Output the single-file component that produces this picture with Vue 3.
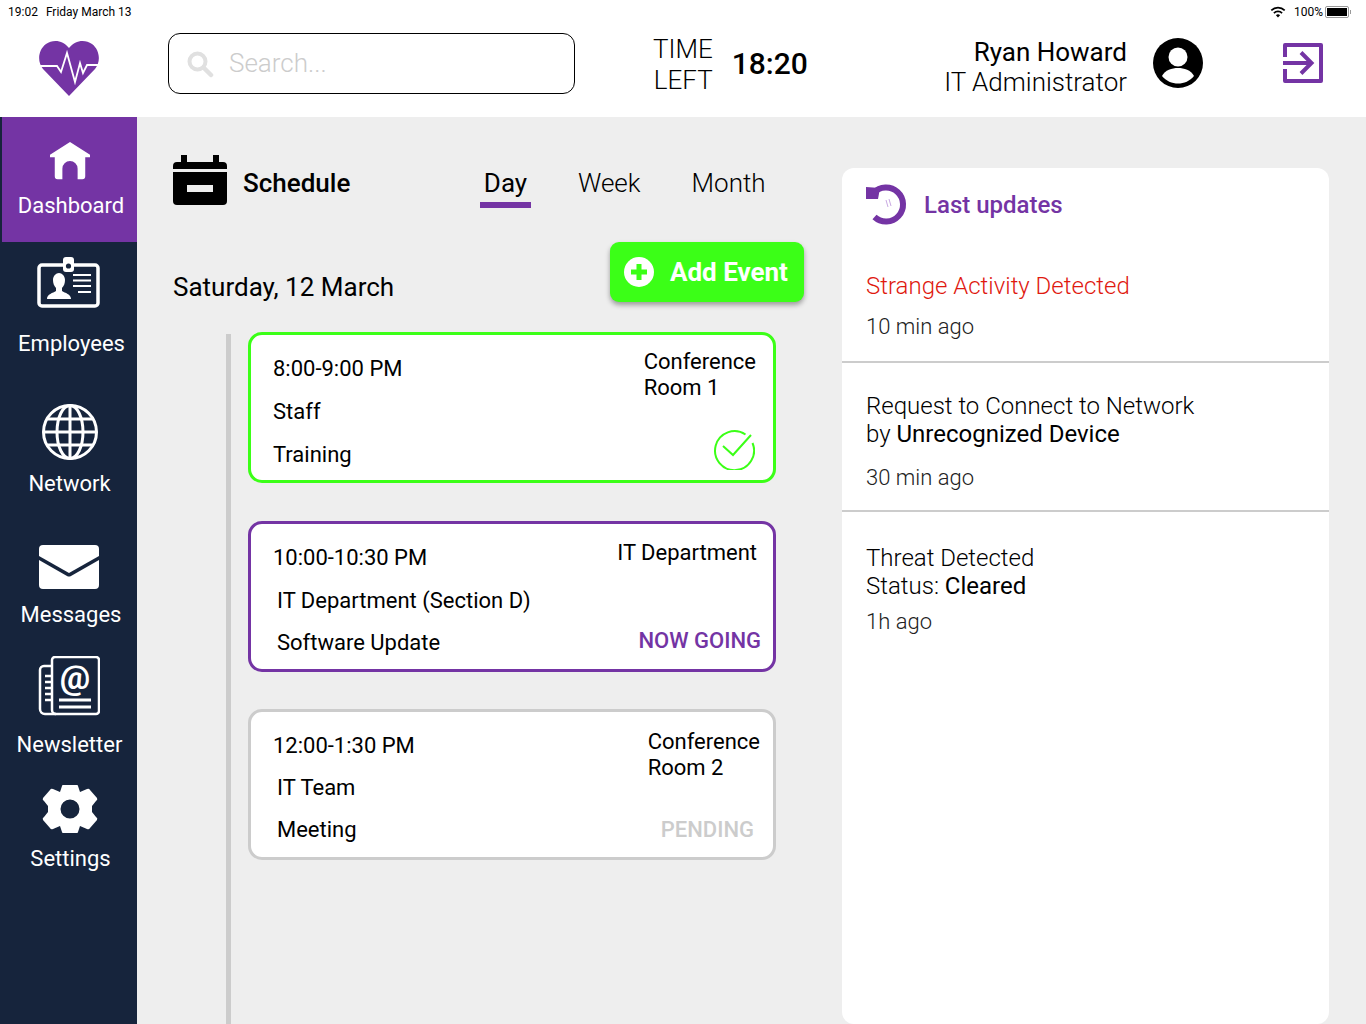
<template>
  <div class="page">
    <div class="status-bar">
      <div class="status-left"><span>19:02</span><span>Friday March 13</span></div>
      <div class="status-right">
        <svg width="16" height="12" viewBox="0 0 16 12"><path d="M8 11.5 5.9 9.2a3 3 0 0 1 4.2 0Z" fill="#000"/><path d="M3.9 7.1a5.8 5.8 0 0 1 8.2 0M1.3 4.4a9.5 9.5 0 0 1 13.4 0" fill="none" stroke="#000" stroke-width="1.7"/></svg>
        <span class="pct">100%</span>
        <span class="battery"><span class="battery-fill"></span></span><span class="battery-tip"></span>
      </div>
    </div>

    <header class="top-bar">
      <div class="logo-cell">
        <svg class="logo" width="62" height="58" viewBox="0 0 62 58">
          <path d="M31 57 5 30C-1 23 0 11 8 5c7-5 17-4 23 4C37 1 47 0 54 5c8 6 9 18 3 25Z" fill="#7434a4"/>
          <path d="M0 27H19L23 33 29 14 37 43 42 24 45 34 49 26H62" fill="none" stroke="#fff" stroke-width="1.800"/>
        </svg>
      </div>
      <div class="search">
        <svg width="28" height="28" viewBox="0 0 28 28"><circle cx="11.500" cy="11.500" r="8" fill="none" stroke="#e0e0e0" stroke-width="4"/><path d="m17.500 17.500 7.500 7.500" stroke="#e0e0e0" stroke-width="4.500" stroke-linecap="round"/></svg>
        <span>Search...</span>
      </div>
      <div class="timer">
        <div class="timer-label"><span>TIME</span><span>LEFT</span></div>
        <div class="timer-value">18:20</div>
      </div>
      <div class="user">
        <div class="user-text"><div class="user-name">Ryan Howard</div><div class="user-role">IT Administrator</div></div>
        <svg width="50" height="50" viewBox="0 0 50 50">
          <circle cx="25" cy="25" r="25" fill="#000"/>
          <circle cx="25" cy="19" r="9.500" fill="#fff"/>
          <path d="M9 38c3-6 10-8 16-8s13 2 16 8c-4 5-10 7.500-16 7.500S13 43 9 38Z" fill="#fff"/>
        </svg>
      </div>
      <svg class="logout" width="42" height="42" viewBox="0 0 42 42">
        <path d="M3 15V3h36v36H3V27" fill="none" stroke="#7434a4" stroke-width="4" stroke-linejoin="round"/>
        <path d="M1 21h29M19 10.500 29.500 21 19 31.500" fill="none" stroke="#7434a4" stroke-width="4"/>
      </svg>
    </header>

    <div class="body">
      <nav class="sidebar">
        <a v-for="item in nav" :key="item.label" class="nav-item" :class="[item.cls, { active: item.active }]">
          <svg v-if="item.icon === 'home'" width="42" height="40" viewBox="0 0 44 42"><path d="M22 0 43 13.500V16H38V36a3 3 0 0 1-3 3H30V28a8 8 0 0 0-16 0V39H9a3 3 0 0 1-3-3V16H1V13.500Z" fill="#fff"/></svg>
          <svg v-else-if="item.icon === 'badge'" width="64" height="52" viewBox="0 0 64 52">
            <rect x="2" y="8" width="59" height="41" rx="3" fill="none" stroke="#fff" stroke-width="3.500"/>
            <rect x="26" y="0" width="11" height="15" rx="3" fill="#fff"/><circle cx="31.500" cy="9" r="2.600" fill="#16243c"/>
            <path d="M10 42c0-5 6-6 9-8v-3c-2-2-3-5-3-8 0-4 3-7 6-7s6 3 6 7c0 3-1 6-3 8v3c3 2 9 3 9 8Z" fill="#fff"/>
            <path d="M36 18h18M36 23.500h18M36 29h18M41 35h13" stroke="#fff" stroke-width="2.200"/>
          </svg>
          <svg v-else-if="item.icon === 'globe'" width="58" height="58" viewBox="0 0 58 58" fill="none" stroke="#fff" stroke-width="3">
            <circle cx="29" cy="29" r="26.500"/><ellipse cx="29" cy="29" rx="13" ry="26.500"/><path d="M29 2v54M3 29h52M7 16h44M7 42h44"/>
          </svg>
          <svg v-else-if="item.icon === 'mail'" width="60" height="44" viewBox="0 0 60 44"><path d="M4 0H56a4 4 0 0 1 4 4V11L30 28 0 11V4a4 4 0 0 1 4-4Z" fill="#fff"/><path d="M0 15 28 31a4 4 0 0 0 4 0L60 15V40a4 4 0 0 1-4 4H4a4 4 0 0 1-4-4Z" fill="#fff"/></svg>
          <svg v-else-if="item.icon === 'news'" width="62" height="60" viewBox="0 0 62 60" fill="none" stroke="#fff" stroke-width="2.500">
            <path d="M14 10H6a4 4 0 0 0-4 4V53a5 5 0 0 0 5 5H18"/>
            <path d="M14 53V4a3 3 0 0 1 3-3H58a3 3 0 0 1 3 3V55a3 3 0 0 1-3 3H18a4 4 0 0 1-4-4Z"/>
            <path d="M7 20h7M7 26h7M7 32h7M7 38h7M7 44h7"/>
            <path d="M21 44H53M21 51H53" stroke-width="3"/>
            <text x="37" y="33" class="at-sign">@</text>
          </svg>
          <svg v-else width="56" height="48" viewBox="0 0 56 48"><path fill-rule="evenodd" d="M20 1Q20 0 21 0H35Q36 0 36 1L38 7 45 4Q47 3 48 5L55 13Q56 15 54 16L50 21V27L54 32Q56 33 55 35L48 43Q47 45 45 44L38 41 36 47Q36 48 35 48H21Q20 48 20 47L18 41 11 44Q9 45 8 43L1 35Q0 33 2 32L6 27V21L2 16Q0 15 1 13L8 5Q9 3 11 4L18 7ZM28 14.500a9.500 9.500 0 1 0 0 19 9.500 9.500 0 0 0 0-19Z" fill="#fff"/></svg>
          <span>{{ item.label }}</span>
        </a>
      </nav>

      <main class="schedule">
        <div class="schedule-head">
          <svg width="54" height="50" viewBox="0 0 54 50">
            <path d="M8 0h6v7h26V0h6v7h4a4 4 0 0 1 4 4v3H0v-3a4 4 0 0 1 4-4h4Z" fill="#000"/>
            <path d="M0 17H54V46a4 4 0 0 1-4 4H4a4 4 0 0 1-4-4Z" fill="#000"/>
            <rect x="14" y="30" width="26" height="7" fill="#eee"/>
          </svg>
          <h2>Schedule</h2>
          <div class="tabs">
            <span class="tab selected">Day</span>
            <span class="tab week">Week</span>
            <span class="tab">Month</span>
          </div>
        </div>
        <div class="date-row">
          <div class="date">Saturday, 12 March</div>
          <button class="add-btn">
            <svg width="30" height="30" viewBox="0 0 30 30"><circle cx="15" cy="15" r="15" fill="#fff"/><path d="M15 7v16M7 15h16" stroke="#3bff17" stroke-width="5"/></svg>
            Add Event
          </button>
        </div>
        <div class="timeline">
          <article class="event done">
            <div class="event-main">
              <div>8:00-9:00 PM</div><div>Staff</div><div>Training</div>
            </div>
            <div class="event-side">
              <div class="event-room">Conference<br>Room 1</div>
              <svg class="check" width="42" height="42" viewBox="0 0 42 42" fill="none" stroke="#3bff17" stroke-width="2">
                <path d="M39.500 15a19.500 19.500 0 1 1-7-8.500"/><path d="m10 18 10 9L38 7"/>
              </svg>
            </div>
          </article>
          <article class="event going">
            <div class="event-main">
              <div>10:00-10:30 PM</div><div class="indent">IT Department (Section D)</div><div class="indent">Software Update</div>
            </div>
            <div class="event-side">
              <div class="event-room">IT Department</div>
              <div class="event-state">NOW GOING</div>
            </div>
          </article>
          <article class="event pending">
            <div class="event-main">
              <div>12:00-1:30 PM</div><div class="indent">IT Team</div><div class="indent">Meeting</div>
            </div>
            <div class="event-side">
              <div class="event-room">Conference<br>Room 2</div>
              <div class="event-state">PENDING</div>
            </div>
          </article>
        </div>
      </main>

      <aside class="updates">
        <div class="updates-head">
          <svg width="42" height="42" viewBox="0 0 42 42">
            <path d="M8.500 33a17 17 0 1 0-1-24" fill="none" stroke="#7434a4" stroke-width="6"/>
            <path d="M0 3 14 4 12 15 0 15Z" fill="#7434a4"/>
            <path d="M20 16l2 7M23 15l2 7" stroke="#c9a9e2" stroke-width="1"/>
          </svg>
          <h3>Last updates</h3>
        </div>
        <section class="update first">
          <div class="update-title alert">Strange Activity Detected</div>
          <div class="update-time">10 min ago</div>
        </section>
        <section class="update second">
          <div class="update-title">Request to Connect to Network<br>by <b>Unrecognized Device</b></div>
          <div class="update-time">30 min ago</div>
        </section>
        <section class="update third">
          <div class="update-title">Threat Detected<br>Status: <b>Cleared</b></div>
          <div class="update-time">1h ago</div>
        </section>
      </aside>
    </div>
  </div>
</template>

<script setup>
const nav = [
  { label: 'Dashboard', icon: 'home', cls: 'n-dash', active: true },
  { label: 'Employees', icon: 'badge', cls: 'n-emp' },
  { label: 'Network', icon: 'globe', cls: 'n-net' },
  { label: 'Messages', icon: 'mail', cls: 'n-msg' },
  { label: 'Newsletter', icon: 'news', cls: 'n-news' },
  { label: 'Settings', icon: 'gear', cls: 'n-set' }
]
</script>

<style>
html, body { margin: 0; overflow: hidden; }
</style>

<style scoped>
.page {
  width: 1366px;
  height: 1024px;
  display: flex;
  flex-direction: column;
  overflow: hidden;
  background: #fff;
  font-family: Roboto, "Liberation Sans", sans-serif;
  color: #000;
}

.status-bar {
  height: 23px;
  flex: none;
  display: flex;
  justify-content: space-between;
  align-items: center;
  padding: 0 15px 0 8px;
  font-size: 12px;
}
.status-left { display: flex; gap: 8px; }
.status-right { display: flex; align-items: center; }
.pct { margin-left: 8px; margin-right: 2px; }
.battery { border: 1px solid #999; border-radius: 2px; padding: 1px; display: block; box-sizing: content-box; width: 20px; height: 8px; }
.battery-fill { display: block; height: 100%; background: #000; }
.battery-tip { width: 1px; height: 4px; margin-left: 1px; background: #999; }

.top-bar {
  height: 94px;
  flex: none;
  display: flex;
  align-items: flex-start;
  padding-right: 42px;
}
.logo-cell { width: 168px; flex: none; padding: 16px 0 0 38px; box-sizing: border-box; }
.logo { display: block; }
.search {
  width: 407px;
  height: 61px;
  flex: none;
  margin-top: 10px;
  box-sizing: border-box;
  border: 1px solid #000;
  border-radius: 12px;
  display: flex;
  align-items: center;
  gap: 15px;
  padding: 0 0 2px 17px;
  font-size: 26px;
  font-weight: 300;
  color: #ccc;
}
.search svg { flex: none; margin-top: 2px; }

.timer { display: flex; align-items: center; margin: 11px 0 0 78px; flex: none; }
.timer-label { display: flex; flex-direction: column; align-items: flex-end; font-size: 26px; font-weight: 300; line-height: 31px; }
.timer-value { font-size: 30px; font-weight: 500; margin: -4px 0 0 19px; }

.user { display: flex; align-items: flex-start; margin: 15px 0 0 auto; flex: none; gap: 26px; }
.user-text { text-align: right; font-size: 26px; line-height: 30px; margin-top: -1px; }
.user-role { font-weight: 300; }
.logout { margin: 19px 0 0 79px; flex: none; }

.body { flex: 1; display: flex; min-height: 0; background: #eee; }

.sidebar { width: 137px; flex: none; background: #16243c; display: flex; flex-direction: column; }
.nav-item { display: flex; flex-direction: column; align-items: center; flex: none; box-sizing: border-box; color: #fff; font-size: 22px; padding-left: 2px; }
.nav-item svg { flex: none; }
.nav-item span { line-height: 27px; }
.nav-item.active { background: #7434a4; margin-left: 2px; padding-left: 0; }
.n-dash { height: 125px; padding-top: 25px; gap: 10px; }
.n-dash span { margin-left: 3px; }
.n-emp { height: 141px; padding-top: 15px; gap: 21px; padding-left: 0; }
.n-emp span { margin-left: 6px; }
.n-net { height: 131px; padding-top: 20px; gap: 9px; }
.n-msg { height: 131px; padding-top: 31px; gap: 12px; padding-left: 1px; }
.n-msg span { margin-left: 4px; }
.n-news { height: 113px; padding-top: 11px; gap: 15px; padding-left: 0; }
.n-news span { margin-left: 2px; }
.n-set { padding-top: 27px; gap: 12px; }
.n-set span { margin-left: 2px; }
.at-sign { font: 700 34px Roboto, sans-serif; text-anchor: middle; fill: #fff; stroke: none; }

.schedule { width: 705px; flex: none; padding: 37px 38px 0 36px; box-sizing: border-box; display: flex; flex-direction: column; }
.schedule-head { display: flex; align-items: flex-start; height: 54px; flex: none; }
.schedule-head svg { margin-top: 1px; flex: none; }
.schedule-head h2 { margin: 14px 0 0 16px; font-size: 26px; line-height: 30px; font-weight: 500; width: 129px; }
.tabs { display: flex; gap: 47px; font-size: 26px; font-weight: 300; margin-left: 108px; }
.tab { height: 54px; line-height: 30px; box-sizing: border-box; padding-top: 14px; }
.tab.week { margin-right: 4px; }
.tab.selected { width: 51px; text-align: center; font-weight: 400; border-bottom: 6px solid #7434a4; }

.date-row { display: flex; justify-content: space-between; align-items: flex-start; margin-top: 34px; height: 90px; flex: none; }
.date { font-size: 26px; margin-top: 29px; line-height: 32px; }
.add-btn {
  width: 194px;
  height: 60px;
  border: none;
  border-radius: 9px;
  background: #3bff17;
  box-shadow: 0 3px 5px rgba(0, 0, 0, 0.35);
  color: #fff;
  font: 700 26px Roboto, sans-serif;
  display: flex;
  align-items: center;
  gap: 16px;
  padding: 0 0 0 14px;
  white-space: nowrap;
}

.timeline { flex: 1; margin: 2px 0 0 53px; border-left: 5px solid #ccc; padding: 0 28px 0 17px; display: flex; flex-direction: column; gap: 38px; }
.event {
  height: 151px;
  flex: none;
  box-sizing: border-box;
  background: #fff;
  border: 3px solid #ccc;
  border-radius: 14px;
  display: flex;
  justify-content: space-between;
  font-size: 22px;
  line-height: 26px;
}
.event.done { border-color: #3bff17; margin-top: -2px; }
.event.going { border-color: #7434a4; }
.event.pending { margin-top: -1px; }
.event-main { padding: 20px 0 0 22px; display: flex; flex-direction: column; gap: 17px; }
.done .event-main { padding-top: 21px; }
.going .event-main { gap: 16.5px; padding-top: 21px; }
.pending .event-main { gap: 16px; padding-top: 21px; }
.event-main .indent { padding-left: 4px; }
.event-side { display: flex; flex-direction: column; justify-content: space-between; align-items: flex-end; }
.event-state { font-weight: 500; }
.done .event-room { margin: 14px 17px 0 0; }
.check { margin: 0 18px 10px 0; }
.going .event-room { margin: 16px 16px 0 0; }
.going .event-state { color: #7434a4; margin: 0 12px 15px 0; }
.pending .event-room { margin: 17px 13px 0 0; }
.pending .event-state { color: #ccc; margin: 0 19px 14px 0; }

.updates {
  width: 487px;
  flex: none;
  margin-top: 51px;
  background: #fff;
  border-radius: 12px;
  font-size: 24px;
  font-weight: 300;
}
.updates-head { display: flex; align-items: center; gap: 16px; padding: 16px 0 0 24px; height: 42px; }
.updates-head h3 { margin: 0; font-size: 24px; font-weight: 500; color: #7434a4; }
.update { padding: 0 24px; border-bottom: 2px solid #ccc; box-sizing: border-box; }
.update:last-child { border-bottom: none; }
.update-title { line-height: 28px; }
.update-title b { font-weight: 400; }
.update-title.alert { color: #e0190f; }
.update-time { color: #222; font-size: 22px; line-height: 28px; }
.first { padding-top: 46px; height: 137px; }
.first .update-time { margin-top: 13px; }
.second { padding-top: 29px; height: 149px; }
.second .update-time { margin-top: 16px; }
.third { padding-top: 32px; }
.third .update-time { margin-top: 8px; }
</style>
